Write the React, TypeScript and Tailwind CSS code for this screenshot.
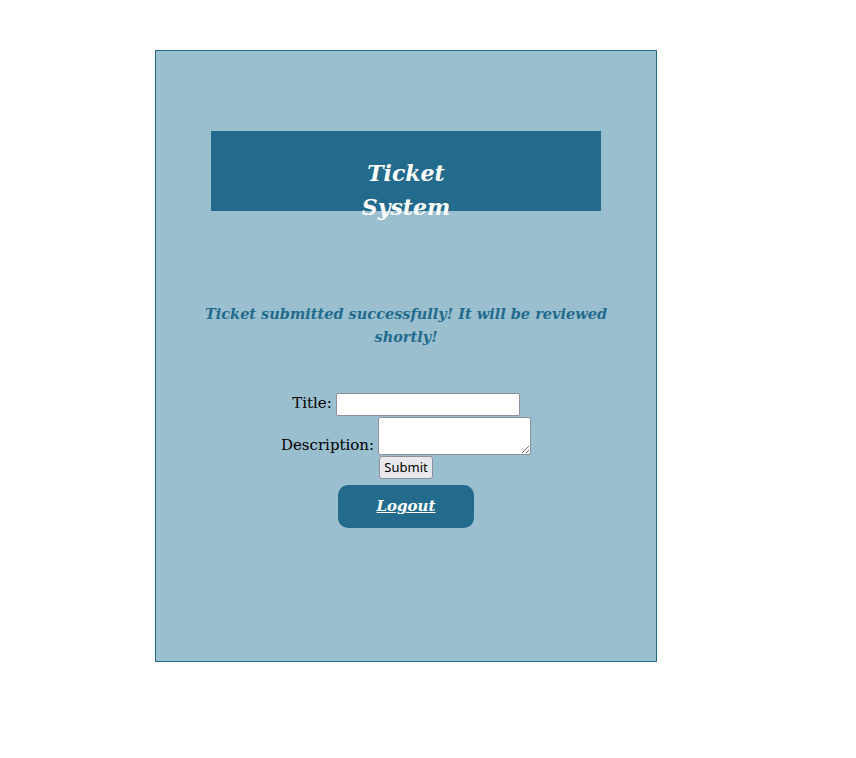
import React from "react";

export default function App() {
  const serif = { fontFamily: '"DejaVu Serif", serif' } as React.CSSProperties;
  return (
    <div className="min-h-[758px] bg-white pt-[50px] pl-[155px]" style={serif}>
      <div className="w-[502px] h-[612px] border border-[#226b8d] bg-[#9abfcf] flex flex-col items-center">
        <div className="mt-[80px] w-[390px] h-[80px] bg-[#226b8d] flex justify-center">
          <div className="w-[110px] pt-[25px] text-center text-white font-bold italic text-[22px] leading-[34px]">
            Ticket System
          </div>
        </div>
        <p className="mt-[91px] w-[420px] text-center text-[#226b8d] font-bold italic text-[14.5px] leading-[23px]">
          Ticket submitted successfully! It will be reviewed shortly!
        </p>
        <form className="mt-[44px] flex flex-col items-center text-black text-[15px]">
          <div className="flex items-end gap-[4px]">
            <label className="leading-[23px] pb-[1px]">Title:</label>
            <input type="text" className="w-[184px] h-[23px] bg-white border border-[#8f8f9d] rounded-[2px]" />
          </div>
          <div className="mt-[1px] flex items-end gap-[4px]">
            <label className="leading-[19px]">Description:</label>
            <textarea className="block w-[153px] h-[38px] bg-white border border-[#8f8f9d] rounded-[2px] resize" />
          </div>
          <button
            type="button"
            className="mt-[1px] w-[54px] h-[23px] bg-[#e9e9ed] border border-[#8f8f9d] rounded-[3px] text-[13px] leading-[19px]"
            style={{ fontFamily: '"Noto Sans", sans-serif' }}
          >
            Submit
          </button>
        </form>
        <button
          type="button"
          className="mt-[6px] w-[136px] h-[43px] rounded-[10px] bg-[#226b8d] text-white font-bold italic underline text-[15px]"
          style={serif}
        >
          Logout
        </button>
      </div>
    </div>
  );
}
